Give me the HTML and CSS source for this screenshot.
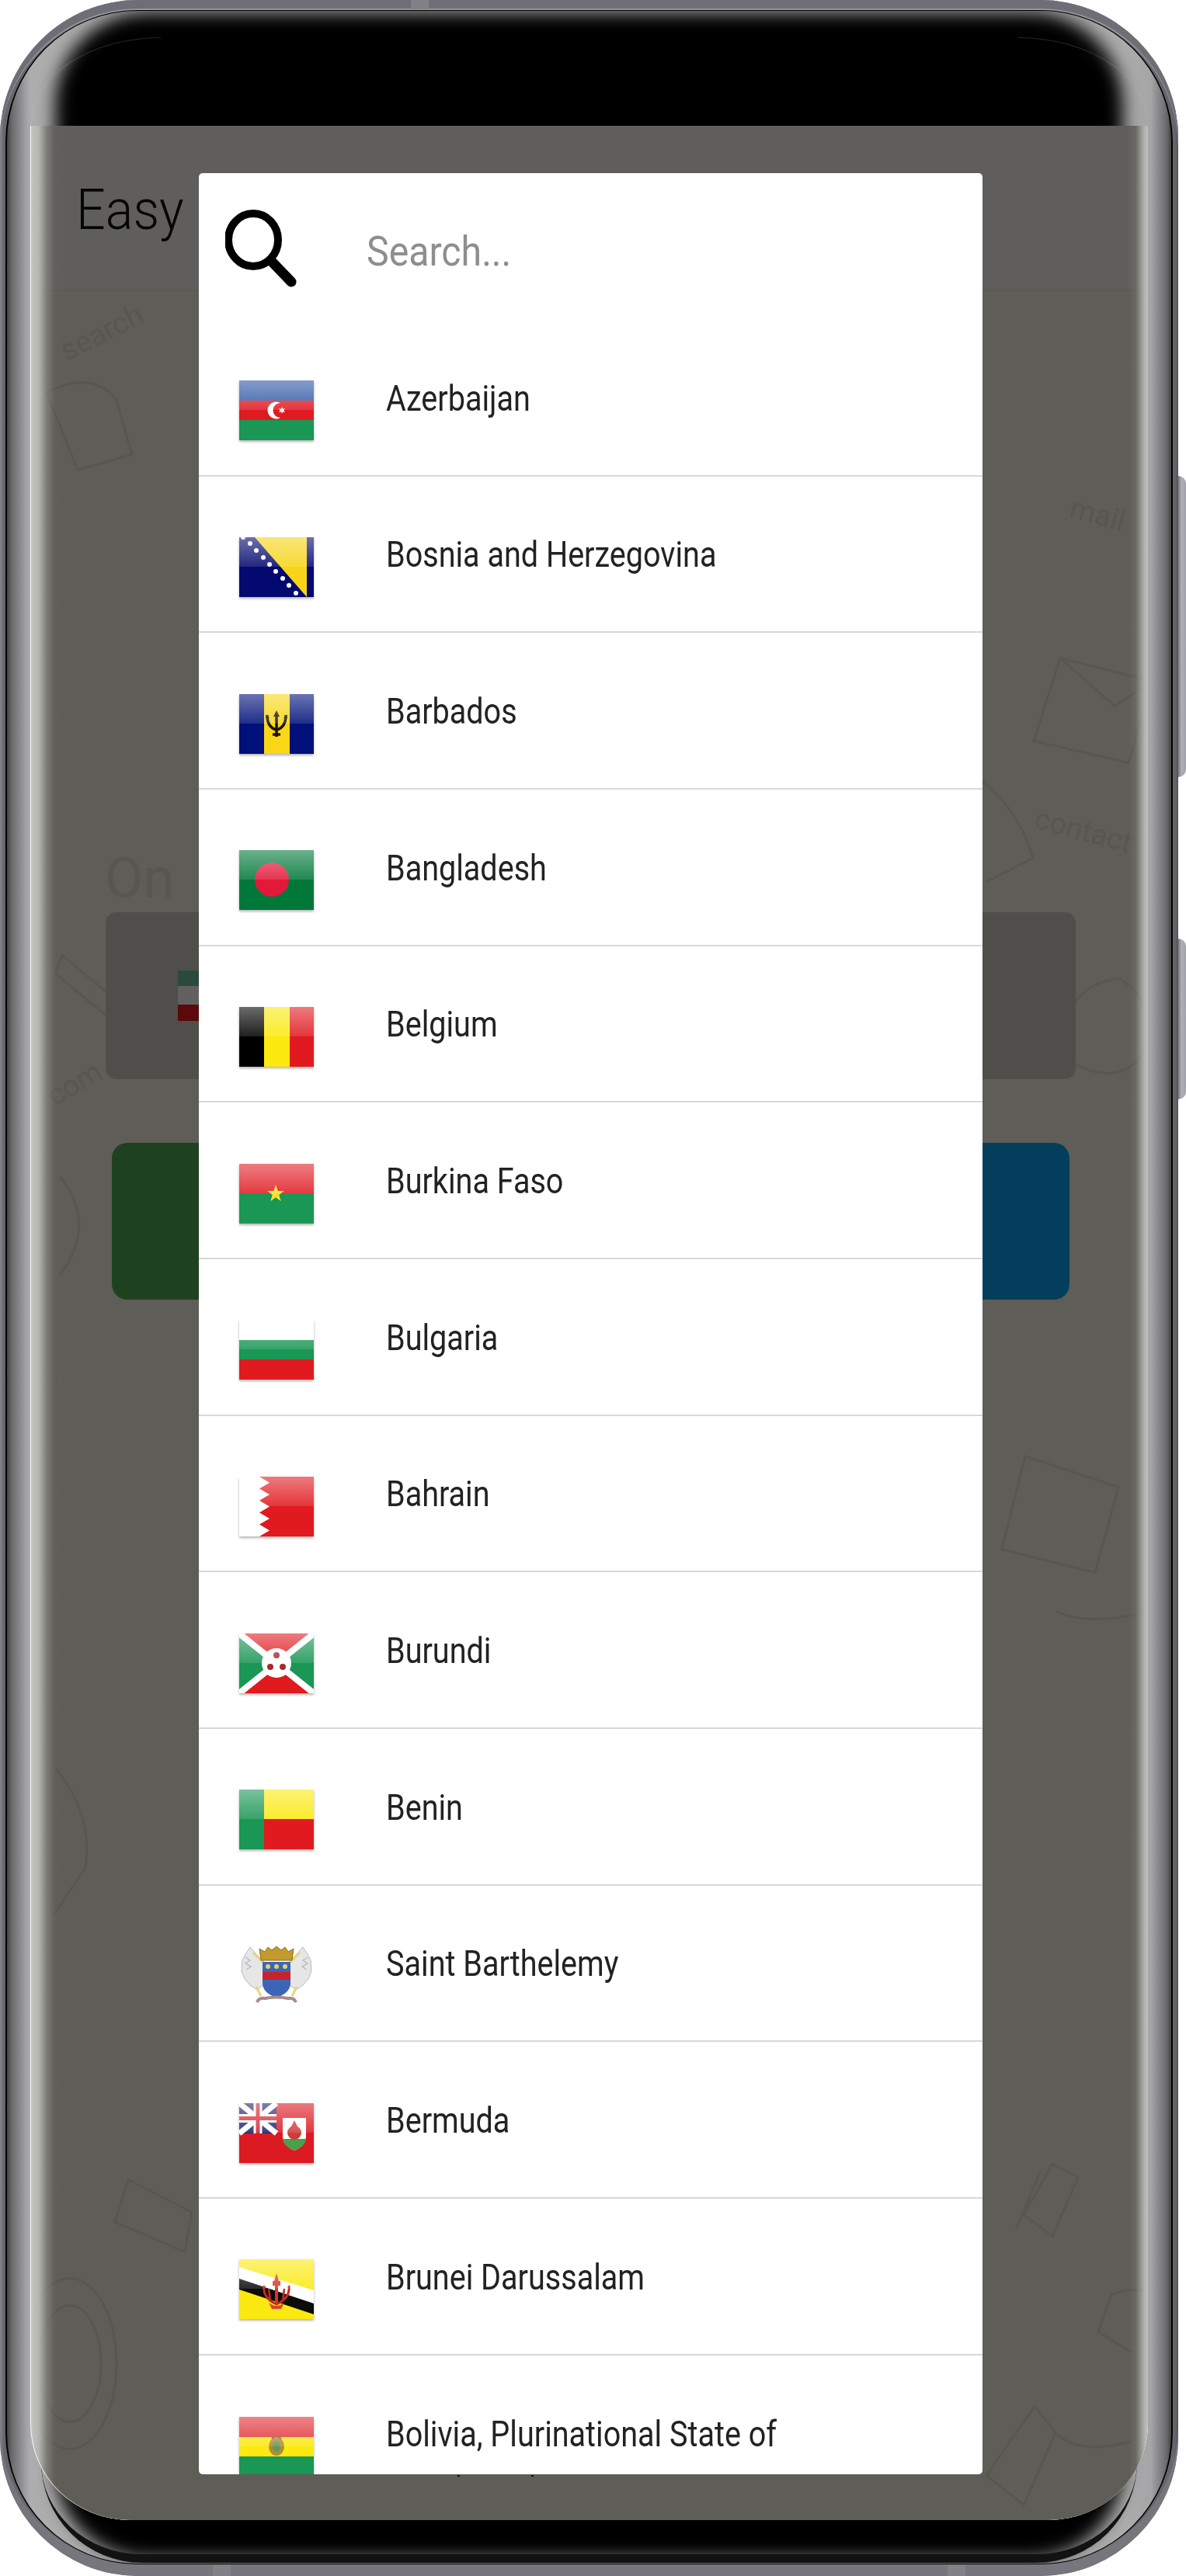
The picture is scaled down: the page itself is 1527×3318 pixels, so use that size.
FILE: index.html
```html
<!DOCTYPE html>
<html lang="en">
<head>
  <meta charset="UTF-8">
  <title>Easy</title>
  <link rel="stylesheet" href="styles.css">
</head>
<body>
  <div class="device">
    <div class="phone">
      <span class="seam seam-top"></span>
      <div class="edge">
        <div class="bezel">
          <span class="glass"></span>
          <span class="hair hair-left"></span>
          <span class="hair hair-right"></span>
          <div class="screen">
            <div class="appbar"><span class="appbar-title">Easy</span></div>
            <div class="home">
              <svg class="doodles" viewBox="0 0 1438 2870" fill="none">
                <text class="doodle-text" transform="translate(46 90) rotate(-27)">search</text>
                <text class="doodle-text" transform="translate(1335 290) rotate(15)">mail</text>
                <text class="doodle-text" transform="translate(1290 690) rotate(15)">contact</text>
                <text class="doodle-text" transform="translate(30 1050) rotate(-30)">com</text>
                <text class="doodle-text doodle-big" transform="translate(95 780)">On</text>
                <path d="M20 130q60-30 90 10l20 70-70 20zM1210 620q60 40 80 110l-60 30"/>
                <path d="M1325 472l118 30-30 105-122-28zM1325 472l70 62 48-32"/>
                <path d="M40 855l77 64-14 19-72-60z"/>
                <path d="M37 1140q32 40 23 80q-8 30-23 45"/>
                <path d="M1330 940q20-50 70-55q40 20 40 80q-20 50-70 40q-50-10-40-65zM1300 960q10-30 30-35"/>
                <path d="M125 2432l82 42-9 51-90-38z"/>
                <path d="M50 2669m-40 0a40 75 0 1 0 80 0a40 75 0 1 0-80 0M50 2669m-60 0a60 110 0 1 0 120 0a60 110 0 1 0-120 0"/>
                <path d="M1315 2412l33 17-33 76-37-28zM1300 2420l-32 76"/>
                <path d="M1292 2724l27 34-41 93-48-38zM1319 2758q30 30 99 11"/>
                <path d="M1374 2628l17-48q30-10 47-3M1374 2628l44 27"/>
                <path d="M1320 1700q40 20 120 0M1280 1500l120 40-30 110-120-30z"/>
                <path d="M30 1900q50 60 40 130l-40 60"/>
              </svg>
              <div class="picker">
                <svg class="picker-flag" viewBox="0 0 48 65"><rect width="48" height="20" fill="#70c49c"/><rect y="20" width="48" height="24" fill="#fff"/><rect y="44" width="48" height="21" fill="#f0181f"/></svg>
              </div>
              <div class="actions">
                <div class="action action-green"></div>
                <div class="action action-blue"></div>
              </div>
            </div>
            <div class="scrim"></div>
            <div class="dialog">
              <div class="search">
                <svg class="search-icon" viewBox="0 0 92 101">
                  <ellipse cx="36" cy="39" rx="32" ry="34" fill="none" stroke="#000" stroke-width="10"/>
                  <path d="M61 68l24 25" stroke="#000" stroke-width="13" stroke-linecap="round"/>
                </svg>
                <input class="search-input" type="text" placeholder="Search...">
              </div>
              <ul class="countries">
                <li class="country">
                  <div class="flag"><svg viewBox="0 0 96 77"><rect width="96" height="26" fill="#2d54a3"/><rect y="26" width="96" height="25" fill="#e01a22"/><rect y="51" width="96" height="26" fill="#1a9655"/><path d="M53 29a11 11 0 1 0 0 19a9 9 0 1 1 0-19z" fill="#fff"/><path d="M55 34l1 2.700 3-.8-1.700 2.600 1.700 2.600-3-.8-1 2.700-1-2.700-3 .8 1.700-2.600-1.700-2.600 3 .8z" fill="#fff"/></svg></div>
                  <span class="country-name">Azerbaijan</span>
                </li>
                <li class="country">
                  <div class="flag"><svg viewBox="0 0 96 77"><rect width="96" height="77" fill="#03096e"/><path d="M20 0h67v77z" fill="#f7d417"/><g fill="#fff"><circle cx="5" cy="0" r="3"/><circle cx="14" cy="8" r="3"/><circle cx="22" cy="17" r="3"/><circle cx="31" cy="26" r="3"/><circle cx="39" cy="35" r="3"/><circle cx="47" cy="44" r="3"/><circle cx="56" cy="53" r="3"/><circle cx="64" cy="62" r="3"/><circle cx="73" cy="72" r="3"/></g></svg></div>
                  <span class="country-name">Bosnia and Herzegovina</span>
                </li>
                <li class="country">
                  <div class="flag"><svg viewBox="0 0 96 77"><rect width="96" height="77" fill="#00107a"/><rect x="32" width="33" height="77" fill="#f9d616"/><path d="M48 24v31M36 27q0 16 12 19q12-3 12-19M43 52h10" fill="none" stroke="#1a1408" stroke-width="3.500"/><path d="M48 21l-4 8h8zM35 26l-1 5h5zM61 26l1 5h-5z" fill="#1a1408"/></svg></div>
                  <span class="country-name">Barbados</span>
                </li>
                <li class="country">
                  <div class="flag"><svg viewBox="0 0 96 77"><rect width="96" height="77" fill="#00783a"/><circle cx="42" cy="38" r="22" fill="#e3193b"/></svg></div>
                  <span class="country-name">Bangladesh</span>
                </li>
                <li class="country">
                  <div class="flag"><svg viewBox="0 0 96 77"><rect width="32" height="77" fill="#000"/><rect x="32" width="33" height="77" fill="#fbe90f"/><rect x="65" width="31" height="77" fill="#e01a1f"/></svg></div>
                  <span class="country-name">Belgium</span>
                </li>
                <li class="country">
                  <div class="flag"><svg viewBox="0 0 96 77"><rect width="96" height="38" fill="#e01f26"/><rect y="38" width="96" height="39" fill="#1a9655"/><path d="M47 27l2.700 8h8.300l-6.800 5 2.600 8.200-6.800-5-6.800 5 2.600-8.200-6.800-5h8.300z" fill="#fbe32a"/></svg></div>
                  <span class="country-name">Burkina Faso</span>
                </li>
                <li class="country">
                  <div class="flag"><svg viewBox="0 0 96 77"><rect width="96" height="26" fill="#fff"/><rect y="26" width="96" height="25" fill="#1a9655"/><rect y="51" width="96" height="26" fill="#e01a1f"/></svg></div>
                  <span class="country-name">Bulgaria</span>
                </li>
                <li class="country">
                  <div class="flag"><svg viewBox="0 0 96 77"><rect width="96" height="77" fill="#e01a1f"/><path d="M0 0h26l13 7.700-13 7.700 13 7.700-13 7.700 13 7.700-13 7.700 13 7.700-13 7.700 13 7.700-13 7.700H0z" fill="#fff"/></svg></div>
                  <span class="country-name">Bahrain</span>
                </li>
                <li class="country">
                  <div class="flag"><svg viewBox="0 0 96 77"><rect width="96" height="77" fill="#e01a1f"/><path d="M0 0l48 38L0 77zM96 0L48 38l48 39z" fill="#1a9655"/><path d="M0 0l96 77M96 0L0 77" stroke="#fff" stroke-width="8"/><circle cx="48" cy="38" r="19" fill="#fff"/><g fill="#a8292c"><circle cx="48" cy="28" r="4"/><circle cx="40" cy="43" r="4"/><circle cx="56" cy="43" r="4"/></g></svg></div>
                  <span class="country-name">Burundi</span>
                </li>
                <li class="country">
                  <div class="flag"><svg viewBox="0 0 96 77"><rect width="32" height="77" fill="#1a9655"/><rect x="32" width="64" height="38" fill="#fbe90f"/><rect x="32" y="38" width="64" height="39" fill="#e01a1f"/></svg></div>
                  <span class="country-name">Benin</span>
                </li>
                <li class="country">
                  <div class="flag flag-plain"><svg viewBox="0 0 96 77">
                    <path d="M14 1l-6 9-4 8-1 14 4 10 7 8 9 6 8-6V19l-8-8z" fill="#e6e6e6" stroke="#b8b8b8"/>
                    <path d="M82 1l6 9 4 8 1 14-4 10-7 8-9 6-8-6V19l8-8z" fill="#e6e6e6" stroke="#b8b8b8"/>
                    <path d="M8 14l6 4-6 4 7 4-6 4M88 14l-6 4 6 4-7 4 6 4" fill="none" stroke="#bdbdbd" stroke-width="1.500"/>
                    <path d="M22 52l6 12M74 52l-6 12M18 8l12 12M78 8L66 20" stroke="#e4d680" stroke-width="3"/>
                    <path d="M28 18l-2-15 7 4 4-6 5 4 6-5 6 5 5-4 4 6 7-4-2 15z" fill="#c39a2e" stroke="#8f6d1a"/>
                    <path d="M30 20h36v29q-2 12-18 17q-16-5-18-17z" fill="#3b66b8"/>
                    <rect x="30" y="33" width="36" height="10" fill="#c5242e"/>
                    <g fill="#e6d068"><circle cx="37" cy="26" r="3"/><circle cx="48" cy="26" r="3"/><circle cx="59" cy="26" r="3"/></g>
                    <path d="M23 72q2-6 10-5q15-3 30 0q8-1 10 5" fill="none" stroke="#a88a88" stroke-width="4"/>
                  </svg></div>
                  <span class="country-name">Saint Barthelemy</span>
                </li>
                <li class="country">
                  <div class="flag"><svg viewBox="0 0 96 77"><rect width="96" height="77" fill="#dc1a22"/><rect width="48" height="39" fill="#23236e"/><path d="M0 0l48 39M48 0L0 39" stroke="#fff" stroke-width="7"/><path d="M24 0v39M0 19.500h48" stroke="#fff" stroke-width="11"/><path d="M24 0v39M0 19.500h48" stroke="#d8262e" stroke-width="5"/><path d="M56 19h30v24q-1 12-15 18q-14-6-15-18z" fill="#fff"/><path d="M56 46h30q-1 10-15 15q-14-5-15-15z" fill="#4aa04a"/><circle cx="71" cy="38" r="9" fill="#cf3b3b"/><path d="M71 22l-5 10h10z" fill="#cf3b3b"/></svg></div>
                  <span class="country-name">Bermuda</span>
                </li>
                <li class="country">
                  <div class="flag"><svg viewBox="0 0 96 77"><rect width="96" height="77" fill="#fbe90f"/><path d="M0 10l96 30v30L0 38z" fill="#fff"/><path d="M0 25l96 32v14L0 39z" fill="#0c0c0c"/><path d="M48 18l3 10h-6zM43 28h10v6H43zM46 34h4v24h-4z" fill="#d8352a"/><path d="M32 34q-2 16 16 24q18-8 16-24" fill="none" stroke="#c8281f" stroke-width="3"/><path d="M38 38l2 16M58 38l-2 16" stroke="#c8281f" stroke-width="2.500"/><path d="M38 56q10 8 20 0l-4 8h-12z" fill="#d8452a"/></svg></div>
                  <span class="country-name">Brunei Darussalam</span>
                </li>
                <li class="country">
                  <div class="flag"><svg viewBox="0 0 96 77"><rect width="96" height="26" fill="#e12a30"/><rect y="26" width="96" height="25" fill="#fbe90f"/><rect y="51" width="96" height="26" fill="#1a9655"/><ellipse cx="48" cy="38" rx="10" ry="12" fill="#b48a35"/><ellipse cx="48" cy="38" rx="5" ry="7" fill="#5d9a5a"/><path d="M42 28q6-6 12 0" fill="none" stroke="#8a5a1e" stroke-width="2"/></svg></div>
                  <span class="country-name">Bolivia, Plurinational State of</span>
                </li>
              </ul>
            </div>
            <span class="speck speck-a"></span>
            <span class="speck speck-b"></span>
          </div>
        </div>
      </div>
      <span class="seam seam-bottom seam-a"></span>
      <span class="seam seam-bottom seam-b"></span>
    </div>
    <div class="keys">
      <div class="key key-long"></div>
      <div class="key key-short"></div>
    </div>
  </div>
</body>
</html>
```

FILE: styles.css
```css
html, body {
  margin: 0;
  padding: 0;
  background: #fff;
}
body {
  font-family: Roboto, "Noto Sans", sans-serif;
}

/* device shell */
.device {
  display: flex;
  align-items: flex-start;
  width: 1527px;
  height: 3318px;
}
.phone {
  position: relative;
  box-sizing: border-box;
  width: 1517px;
  height: 3318px;
  padding: 13px 7px 15px;
  border-radius: 178px;
  background: linear-gradient(90deg, #85858b 0, #66666c 5px, #66666c calc(100% - 5px), #55555c 100%);
  box-shadow: inset 0 11px 0 #6e6e76, inset 0 13px 0 #95959b, inset 0 -15px 0 #76767c;
}
.edge {
  height: 100%;
  box-sizing: border-box;
  padding: 1px 2px;
  border-radius: 170px;
  background: #000;
}
.bezel {
  position: relative;
  height: 100%;
  box-sizing: border-box;
  padding: 148px 30px 56px 31px;
  border-radius: 168px;
  overflow: hidden;
  background: linear-gradient(90deg, #444 0, #6a6a6c 6px, #a5a5a7 26px, #adadae 30px, #adadae 60px, #adadae calc(100% - 60px), #a5a5a7 calc(100% - 26px), #6a6a6c calc(100% - 6px), #444 100%);
}
.glass {
  position: absolute;
  top: 2px;
  left: 62px;
  right: 62px;
  bottom: 6px;
  border-radius: 120px;
  background: #000;
  filter: blur(11px);
}
.bezel::after {
  content: "";
  position: absolute;
  left: 44px;
  right: 44px;
  bottom: 1px;
  height: 130px;
  box-sizing: border-box;
  border-bottom: 11px solid #121212;
  border-radius: 0 0 130px 130px;
}
.hair {
  position: absolute;
  top: 34px;
  width: 167px;
  height: 112px;
  box-sizing: border-box;
  border-top: 1px solid rgba(255, 255, 255, 0.15);
}
.hair-left {
  left: 31px;
  border-left: 1px solid rgba(255, 255, 255, 0.08);
  border-top-left-radius: 167px 112px;
}
.hair-right {
  right: 30px;
  border-right: 1px solid rgba(255, 255, 255, 0.08);
  border-top-right-radius: 167px 112px;
}
.seam {
  position: absolute;
  background: #818187;
}
.seam-top { top: 0; left: 529px; width: 23px; height: 12px; }
.seam-bottom { bottom: 0; width: 23px; height: 14px; }
.seam-a { left: 274px; }
.seam-b { left: 1220px; }
.keys {
  display: flex;
  flex-direction: column;
  gap: 208px;
  padding-top: 613px;
}
.key {
  width: 10px;
  border-radius: 0 12px 12px 0;
  background: linear-gradient(90deg, #77777e 0, #b0b0b8 4px, #a2a2aa 100%);
}
.key-long { height: 388px; }
.key-short { height: 207px; }

/* app under the dialog */
.screen {
  position: relative;
  height: 100%;
  border-radius: 0 0 128px 128px / 0 0 124px 124px;
  background: #fff;
  box-shadow: -1px 0 0 rgba(255, 255, 255, 0.9);
  z-index: 1;
}
.appbar {
  display: flex;
  align-items: center;
  box-sizing: border-box;
  height: 213px;
  padding: 4px 58px 0;
  background: #f9f8f2;
  border-bottom: 2px solid #ecebe4;
}
.appbar-title {
  font-size: 73px;
  font-weight: 300;
  color: #111;
  transform: scaleX(0.91);
  transform-origin: left center;
}
.home {
  position: relative;
  height: calc(100% - 213px);
  overflow: hidden;
  background: #f9f3e4;
  border-radius: 0 0 128px 128px / 0 0 124px 124px;
}
.doodles {
  position: absolute;
  top: 0;
  left: 0;
  width: 100%;
  height: 100%;
  stroke: #e6e1d2;
  stroke-width: 3;
  filter: blur(0.7px);
}
.doodle-text {
  font-family: Roboto, "Noto Sans", sans-serif;
  font-size: 38px;
  stroke: none;
  fill: #e6e1d2;
}
.doodle-big {
  font-size: 72px;
}
.picker {
  position: absolute;
  top: 800px;
  left: 96px;
  width: 1249px;
  height: 215px;
  border-radius: 14px;
  background: #cfccc5;
  display: flex;
  align-items: center;
}
.picker-flag {
  width: 48px;
  height: 65px;
  margin-left: 93px;
}
.actions {
  position: absolute;
  top: 1097px;
  left: 104px;
  width: 1233px;
  display: flex;
  justify-content: space-between;
}
.action {
  width: 500px;
  height: 202px;
  border-radius: 20px;
}
.action-green { background: #4faf55; }
.action-blue { background: #0aa5f2; }

/* overlays */
.scrim {
  position: absolute;
  inset: 0;
  border-radius: 0 0 128px 128px / 0 0 124px 124px;
  background: linear-gradient(90deg, rgba(200,200,198,0.96) 0, rgba(190,190,186,0.9) 10px, rgba(146,144,138,0.62) 20px, rgba(108,105,98,0.2) 30px, rgba(95,92,86,0) 40px, rgba(95,92,86,0) calc(100% - 26px), rgba(120,118,112,0.4) calc(100% - 16px), rgba(190,190,186,0.9) calc(100% - 4px), rgba(196,196,194,0.96) 100%), rgba(0, 0, 0, 0.62);
}
.dialog {
  position: absolute;
  top: 61px;
  left: 216px;
  width: 1009px;
  height: 2964px;
  border-radius: 5px;
  overflow: hidden;
  background: #fff;
}
.search {
  display: flex;
  align-items: flex-start;
  height: 189px;
  padding-left: 34px;
}
.search-icon {
  flex: none;
  width: 92px;
  height: 101px;
  margin-top: 47px;
}
.search-input {
  margin: 70px 0 0 90px;
  width: 700px;
  border: none;
  outline: none;
  padding: 0;
  font-family: Roboto, "Noto Sans", sans-serif;
  font-size: 53px;
  font-weight: 400;
  transform: scaleX(0.91);
  transform-origin: left center;
}
.search-input::placeholder {
  color: #8e8e8e;
  opacity: 1;
}
.countries {
  margin: 0;
  padding: 0;
  list-style: none;
}
.country {
  display: flex;
  align-items: center;
  box-sizing: border-box;
  height: 201.67px;
  padding-left: 52px;
  border-bottom: 2px solid #d8d8d8;
}
.country:last-child {
  border-bottom: none;
}
.flag {
  position: relative;
  flex: none;
  width: 96px;
  height: 77px;
  margin-top: 34px;
  box-shadow: 0 2px 3px rgba(0, 0, 0, 0.3);
  filter: blur(0.6px);
}
.flag svg {
  display: block;
  width: 96px;
  height: 77px;
}
.flag::after {
  content: "";
  position: absolute;
  inset: 0;
  background: linear-gradient(180deg, rgba(255,255,255,0.42) 0, rgba(255,255,255,0.12) 50%, rgba(255,255,255,0) 50%);
}
.flag-plain {
  box-shadow: none;
}
.flag-plain::after {
  display: none;
}
.country-name {
  margin-left: 93px;
  padding-top: 2px;
  font-size: 46px;
  font-weight: 400;
  color: #222;
  white-space: nowrap;
  transform: scaleX(0.86);
  transform-origin: left center;
}
.speck {
  position: absolute;
  top: 3026px;
  width: 3px;
  height: 2px;
  background: #111;
}
.speck-a { left: 549px; }
.speck-b { left: 644px; }
```
